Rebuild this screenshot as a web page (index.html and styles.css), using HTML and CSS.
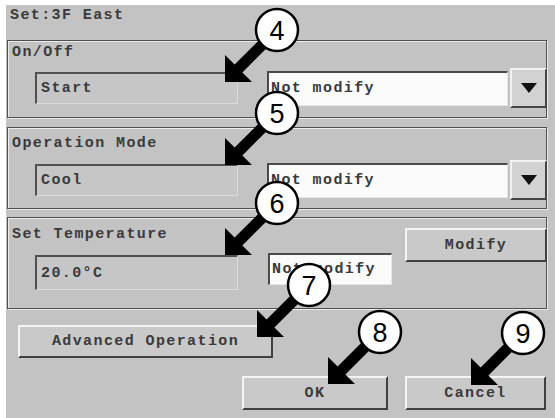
FILE: index.html
```html
<!DOCTYPE html>
<html>
<head>
	<meta charset="utf-8">
	<meta name="viewport" content="width=device-width">
	<title>Set:3F East</title>
	<link rel="stylesheet" href="styles.css">
</head>
<body>
	<div class="screen">
		<div class="title">Set:3F East</div>

		<div class="group group-onoff">
			<div class="group-label">On/Off</div>
			<div class="row">
				<div class="field">Start</div>
				<div class="select">
					<div class="select-text">Not modify</div>
					<div class="select-btn"><svg width="16" height="10" viewBox="0 0 16 10"><polygon points="0,0 16,0 8,10" fill="#111"/></svg></div>
				</div>
			</div>
		</div>

		<div class="group group-mode">
			<div class="group-label">Operation Mode</div>
			<div class="row">
				<div class="field">Cool</div>
				<div class="select">
					<div class="select-text">Not modify</div>
					<div class="select-btn"><svg width="16" height="10" viewBox="0 0 16 10"><polygon points="0,0 16,0 8,10" fill="#111"/></svg></div>
				</div>
			</div>
		</div>

		<div class="group group-temp">
			<div class="temp-left">
				<div class="group-label">Set Temperature</div>
				<div class="field">20.0°C</div>
			</div>
			<div class="white-box">Not modify</div>
			<div class="btn btn-modify">Modify</div>
		</div>

		<div class="btn btn-advanced">Advanced Operation</div>

		<div class="actions">
			<div class="btn btn-ok">OK</div>
			<div class="btn btn-cancel">Cancel</div>
		</div>
	</div>

	<!-- numbered callouts drawn over the dialog -->
	<svg class="callouts" width="555" height="418" viewBox="0 0 555 418">
		<defs>
			<polygon id="arrow" points="0,0 0,-27 9.6,-17.4 38.1,-45.9 45.9,-38.1 17.4,-9.6 27,0" fill="#000"/>
		</defs>
		<use href="#arrow" x="225" y="82"/>
		<use href="#arrow" x="225" y="165"/>
		<use href="#arrow" x="225" y="255"/>
		<use href="#arrow" x="257" y="337"/>
		<use href="#arrow" x="328" y="384"/>
		<use href="#arrow" x="471" y="385"/>
		<g class="badge"><circle cx="277" cy="30" r="21"/><text x="277" y="40">4</text></g>
		<g class="badge"><circle cx="277" cy="113" r="21"/><text x="277" y="123">5</text></g>
		<g class="badge"><circle cx="277" cy="203" r="21"/><text x="277" y="213">6</text></g>
		<g class="badge"><circle cx="309" cy="285" r="21"/><text x="309" y="295">7</text></g>
		<g class="badge"><circle cx="380" cy="332" r="21"/><text x="380" y="342">8</text></g>
		<g class="badge"><circle cx="523" cy="333" r="21"/><text x="523" y="343">9</text></g>
	</svg>
</body>
</html>
```

FILE: styles.css
```css
body {
	margin: 0;
	background: #fff;
	position: relative;
	width: 555px;
	height: 418px;
	overflow: hidden;
}

.screen {
	margin: 5px 0 0 6px;
	width: 549px;
	height: 413px;
	box-sizing: border-box;
	padding-left: 1px;
	background: #c3c3c3;
	font-family: "Liberation Mono", monospace;
	font-size: 15px;
	font-weight: bold;
	letter-spacing: 1.4px;
	color: #3a3a3a;
}

.title {
	height: 35px;
	box-sizing: border-box;
	padding: 3px 0 0 3px;
	line-height: 16px;
}

.group {
	width: 540px;
	box-sizing: border-box;
	border: 1px solid #4f4f4f;
	box-shadow: 1px 1px 0 #ececec, inset 1px 1px 0 #ececec;
}

.group-label {
	padding: 4px 0 0 4px;
	line-height: 16px;
}

.group-onoff {
	height: 78px;
}

.group-mode {
	height: 82px;
	margin-top: 9px;
}

.group-mode .group-label {
	padding-top: 8px;
}

.group-mode .row {
	margin-top: 8px;
}

.row {
	display: flex;
	align-items: center;
	margin-top: 7px;
	padding-left: 27px;
}

.field {
	width: 203px;
	height: 32px;
	box-sizing: border-box;
	display: flex;
	align-items: center;
	padding-left: 4px;
	background: #c6c6c6;
	border-top: 2px solid #505050;
	border-left: 2px solid #505050;
	border-bottom: 1px solid #dcdcdc;
	border-right: 1px solid #dcdcdc;
}

.select {
	flex: 1;
	display: flex;
	align-items: center;
	margin-left: 29px;
	margin-right: -1px;
	gap: 2px;
}

.select-text,
.white-box {
	height: 35px;
	box-sizing: border-box;
	display: flex;
	align-items: center;
	padding-left: 2px;
	background: #fbfbfb;
	border-top: 2px solid #4a4a4a;
	border-left: 2px solid #4a4a4a;
	border-bottom: 1px solid #e6e6e6;
	border-right: 1px solid #e6e6e6;
}

.select-text {
	flex: 1;
}

.select-btn {
	width: 37px;
	height: 40px;
	box-sizing: border-box;
	display: flex;
	align-items: center;
	justify-content: center;
	background: #d2d2d2;
	border-top: 2px solid #f2f2f2;
	border-left: 2px solid #f2f2f2;
	border-bottom: 2px solid #454545;
	border-right: 2px solid #454545;
}

.group-temp {
	height: 92px;
	margin-top: 8px;
	display: flex;
}

.temp-left {
	width: 230px;
	padding-top: 5px;
}

.temp-left .field {
	margin: 12px 0 0 27px;
	height: 35px;
}

.white-box {
	width: 124px;
	height: 32px;
	align-self: flex-end;
	margin: 0 0 23px 30px;
}

.btn {
	box-sizing: border-box;
	display: flex;
	align-items: center;
	justify-content: center;
	background: #c9c9c9;
	border-top: 2px solid #f4f4f4;
	border-left: 2px solid #f4f4f4;
	border-bottom: 2px solid #404040;
	border-right: 2px solid #404040;
}

.btn-modify {
	width: 142px;
	height: 34px;
	align-self: flex-start;
	margin: 10px -1px 0 auto;
}

.btn-advanced {
	width: 255px;
	height: 33px;
	margin: 16px 0 0 11px;
}

.actions {
	display: flex;
	justify-content: flex-end;
	gap: 17px;
	margin-top: 18px;
	padding-right: 9px;
}

.btn-ok {
	width: 146px;
	height: 34px;
}

.btn-cancel {
	width: 141px;
	height: 34px;
}

.callouts {
	position: absolute;
	left: 0;
	top: 0;
}

.badge circle {
	fill: #fff;
	stroke: #000;
	stroke-width: 2.5;
}

.badge text {
	font-family: "Liberation Sans", sans-serif;
	font-size: 27px;
	text-anchor: middle;
	fill: #000;
}
```
